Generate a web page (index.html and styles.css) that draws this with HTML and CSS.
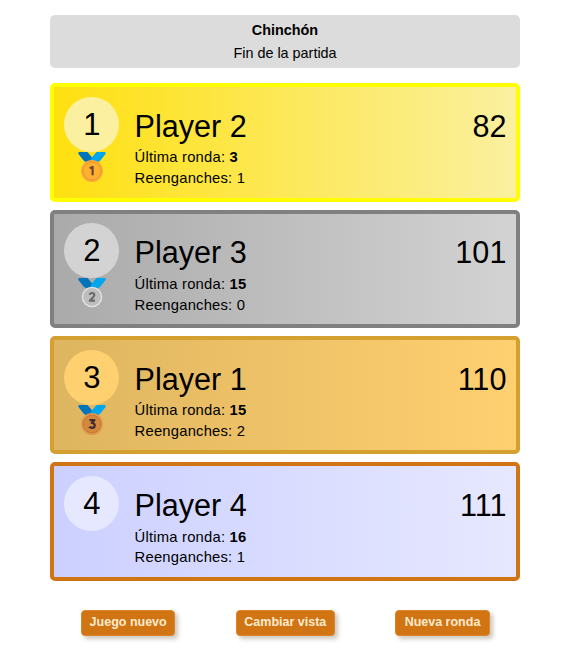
FILE: index.html
```html
<!DOCTYPE html>
<html lang="es">
<head>
<meta charset="utf-8">
<title>Chinchón</title>
<link rel="stylesheet" href="styles.css">
</head>
<body>
<main class="page">
  <header class="header">
    <strong>Chinchón</strong>
    <span>Fin de la partida</span>
  </header>

  <section class="players">
    <article class="card card-gold">
      <div class="rank">
        <div class="position">1</div>
        <svg class="medal" viewBox="0 0 28 31">
          <path class="ribbon-left" d="M1.5 0H9.5L15 6.5L13 10H8Q5.5 9 4 6.5L0.5 2Q-0.3 0 1.5 0Z"/>
          <path class="ribbon-right" d="M18.5 0H26.5Q28.3 0 27.5 2L24 6.5Q22.5 9 20 10H12.5L13 6.5Z"/>
          <circle class="disc" cx="14" cy="19" r="10.9"/>
          <circle class="ring" cx="14" cy="19" r="8.9"/>
          <path class="digit" d="M11.7 16.2L14.6 15V23.2"/>
        </svg>
      </div>
      <div class="info">
        <h2>Player 2</h2>
        <p>Última ronda: <b>3</b></p>
        <p>Reenganches: 1</p>
      </div>
      <div class="score">82</div>
    </article>

    <article class="card card-silver">
      <div class="rank">
        <div class="position">2</div>
        <svg class="medal" viewBox="0 0 28 31">
          <path class="ribbon-left" d="M1.5 0H9.5L15 6.5L13 10H8Q5.5 9 4 6.5L0.5 2Q-0.3 0 1.5 0Z"/>
          <path class="ribbon-right" d="M18.5 0H26.5Q28.3 0 27.5 2L24 6.5Q22.5 9 20 10H12.5L13 6.5Z"/>
          <circle class="disc" cx="14" cy="19" r="10.3"/>
          <circle class="ring" cx="14" cy="19" r="8.9"/>
          <path class="digit" d="M11.6 16.8Q12 15 14.1 15Q16.3 15 16.3 17Q16.3 18.4 11.8 22.7H17"/>
        </svg>
      </div>
      <div class="info">
        <h2>Player 3</h2>
        <p>Última ronda: <b>15</b></p>
        <p>Reenganches: 0</p>
      </div>
      <div class="score">101</div>
    </article>

    <article class="card card-bronze">
      <div class="rank">
        <div class="position">3</div>
        <svg class="medal" viewBox="0 0 28 31">
          <path class="ribbon-left" d="M1.5 0H9.5L15 6.5L13 10H8Q5.5 9 4 6.5L0.5 2Q-0.3 0 1.5 0Z"/>
          <path class="ribbon-right" d="M18.5 0H26.5Q28.3 0 27.5 2L24 6.5Q22.5 9 20 10H12.5L13 6.5Z"/>
          <circle class="disc" cx="14" cy="19" r="10.9"/>
          <circle class="ring" cx="14" cy="19" r="8.9"/>
          <path class="digit" d="M11.5 15.2H16.4L13.8 18Q16.7 18 16.7 20.4Q16.7 22.8 14 22.8Q12 22.8 11.3 21.7"/>
        </svg>
      </div>
      <div class="info">
        <h2>Player 1</h2>
        <p>Última ronda: <b>15</b></p>
        <p>Reenganches: 2</p>
      </div>
      <div class="score">110</div>
    </article>

    <article class="card card-plain">
      <div class="rank">
        <div class="position">4</div>
      </div>
      <div class="info">
        <h2>Player 4</h2>
        <p>Última ronda: <b>16</b></p>
        <p>Reenganches: 1</p>
      </div>
      <div class="score">111</div>
    </article>
  </section>

  <nav class="actions">
    <button type="button">Juego nuevo</button>
    <button type="button">Cambiar vista</button>
    <button type="button">Nueva ronda</button>
  </nav>
</main>
</body>
</html>
```

FILE: styles.css
```css
* {
  box-sizing: border-box;
}

body {
  margin: 0;
  background: #fff;
  color: #000;
  font-family: "Liberation Sans", Arial, sans-serif;
  font-size: 14.4px;
}

.page {
  width: 469.6px;
  margin: 0 auto;
  padding: 15px 0 12px;
}

.header {
  display: flex;
  flex-direction: column;
  align-items: center;
  height: 53px;
  padding-top: 4px;
  border-radius: 5px;
  background: #dcdcdc;
  line-height: 23px;
}

.players {
  display: flex;
  flex-direction: column;
  gap: 8px;
  margin-top: 15.2px;
}

.card {
  display: flex;
  height: 118.4px;
  padding: 9.6px 9.4px 0 9.8px;
  border: 4px solid;
  border-radius: 5px;
}

.card-gold {
  border-color: #ffff00;
  background: linear-gradient(to right, #ffe010, #faf0a0);
}

.card-silver {
  border-color: #808080;
  background: linear-gradient(to right, #aaaaaa, #d3d3d3);
}

.card-bronze {
  border-color: #d4a030;
  background: linear-gradient(to right, #deb560, #ffd070);
}

.card-plain {
  border-color: #d07414;
  background: linear-gradient(to right, #ccd0ff, #e6e8ff);
}

.rank {
  display: flex;
  flex-direction: column;
  align-items: center;
  width: 55px;
}

.position {
  width: 55px;
  height: 55px;
  flex-shrink: 0;
  padding-left: 0.6px;
  border-radius: 50%;
  font-size: 31px;
  line-height: 55.6px;
  text-align: center;
}

.card-gold .position { background: #faf0a0; }
.card-silver .position { background: #d3d3d3; }
.card-bronze .position { background: #ffd070; }
.card-plain .position { background: #e6e8ff; }

.medal {
  width: 28px;
  height: 31px;
  margin-left: 0.4px;
}

.ribbon-left { fill: #0074ba; }
.ribbon-right { fill: #00a6ed; }
.disc { fill: #f9a63a; }
.ring {
  fill: #ffb02e;
  stroke: #e59535;
  stroke-width: 0.7;
}
.digit {
  fill: none;
  stroke: #6d4534;
  stroke-width: 2.2;
  stroke-linejoin: round;
}

.card-silver .disc { fill: #e2e2e2; }
.card-silver .ring { fill: #bebebe; stroke: none; }
.card-silver .digit { stroke: #6b6b6b; }
.card-bronze .disc { fill: #e19747; }
.card-bronze .ring { fill: #d3883e; stroke: #b9713f; }
.card-bronze .digit { stroke: #402a32; }

.info {
  flex: 1;
  padding: 11px 0 0 15.6px;
}

.info h2 {
  margin: 0 0 2.7px;
  font-size: 30.6px;
  font-weight: 400;
  line-height: 37px;
}

.info p {
  margin: 0;
  font-size: 14.8px;
  letter-spacing: 0.2px;
  line-height: 20.8px;
}

.score {
  padding-top: 11px;
  font-size: 30.6px;
  line-height: 37px;
}

.actions {
  display: flex;
  justify-content: space-between;
  padding: 29px 30px 0 30.6px;
}

.actions button {
  min-width: 94.6px;
  height: 26px;
  padding: 0 7.8px 2px;
  border: 1px solid #dc852c;
  border-radius: 4px;
  background: #d07414;
  box-shadow: 3px 3px 4px rgba(90, 70, 40, 0.3);
  color: #ffebcd;
  font-family: inherit;
  font-size: 12.5px;
  font-weight: 700;
  white-space: nowrap;
}
```
